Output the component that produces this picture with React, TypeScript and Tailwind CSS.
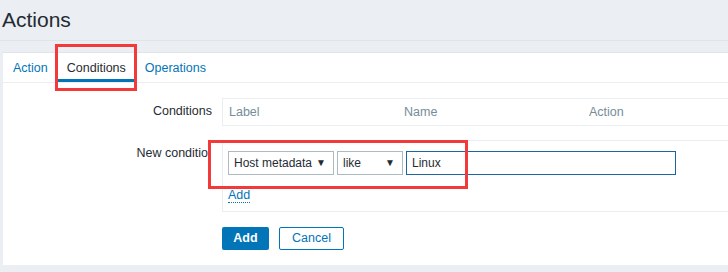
import React from "react";

const font = { fontFamily: '"Liberation Sans", Arial, sans-serif' };

const Select: React.FC<{ value: string; width: string }> = ({ value, width }) => (
  <div
    className={`flex h-[24px] items-center justify-between border border-[#acbbc2] bg-white pl-[5px] pr-[7px] text-[12px] text-[#1f2c33] ${width}`}
  >
    <span>{value}</span>
    <span className="text-[10px] leading-none">▼</span>
  </div>
);

export default function App() {
  return (
    <div className="relative h-[272px] w-[728px] overflow-hidden bg-[#ebeef2] text-[#1f2c33]" style={font}>
      <div className="h-[41px] border-b border-[#dfe4e7] pl-[2px] pt-[8px] text-[21px] leading-[24px]">Actions</div>

      <div className="ml-[3px] mt-[11px] h-[213px] border-t border-[#dfe4e7] bg-white text-[12.5px]">
        {/* tabs */}
        <div className="flex h-[30px] border-b border-[#ebeef0]">
          <div className="flex items-center px-[10px] pt-[1px] text-[#0275b8]">Action</div>
          <div className="flex items-center border-b-[3px] border-[#0275b8] px-[9px] pt-[4px]">Conditions</div>
          <div className="flex items-center px-[10px] pt-[1px] text-[#0275b8]">Operations</div>
        </div>

        <div className="pt-[15px]">
          {/* conditions list */}
          <div className="flex">
            <div className="w-[219px] shrink-0 pr-[10px] pt-[4px] text-right">Conditions</div>
            <div className="flex h-[28px] w-[560px] shrink-0 items-center border border-[#ebeef0] text-[#768d99]">
              <div className="w-[181px] pl-[6px]">Label</div>
              <div className="w-[185px]">Name</div>
              <div>Action</div>
            </div>
          </div>

          {/* new condition */}
          <div className="mt-[14px] flex">
            <div className="mr-[11px] flex w-[208px] shrink-0 justify-end overflow-hidden whitespace-nowrap pt-[4px]">
              <span className="mr-[-4px]">New condition</span>
            </div>
            <div className="h-[72px] w-[560px] shrink-0 border border-[#ebeef0] pl-[5px] pt-[10px]">
              <div className="flex gap-[3px]">
                <Select value="Host metadata" width="w-[106px]" />
                <Select value="like" width="w-[66px]" />
                <div className="flex h-[24px] w-[270px] items-center border border-[#1b65a0] pl-[5px] text-[12px]">Linux</div>
              </div>
              <div className="mt-[11px]">
                <span className="border-b border-dotted border-[#0275b8] text-[#0275b8]">Add</span>
              </div>
            </div>
          </div>

          {/* buttons */}
          <div className="ml-[219px] mt-[15px] flex gap-[10px]">
            <button className="h-[23px] w-[47px] rounded-[2px] bg-[#0275b8] font-bold text-white">Add</button>
            <button className="h-[23px] w-[65px] rounded-[2px] border border-[#0275b8] bg-white text-[#0275b8]">Cancel</button>
          </div>
        </div>
      </div>

      {/* red highlight boxes */}
      <div className="pointer-events-none absolute left-[55px] top-[44px] h-[47px] w-[82px] border-[3px] border-[#f33a3a]" />
      <div className="pointer-events-none absolute left-[208px] top-[140px] h-[49px] w-[260px] border-[3px] border-[#f33a3a]" />
    </div>
  );
}
